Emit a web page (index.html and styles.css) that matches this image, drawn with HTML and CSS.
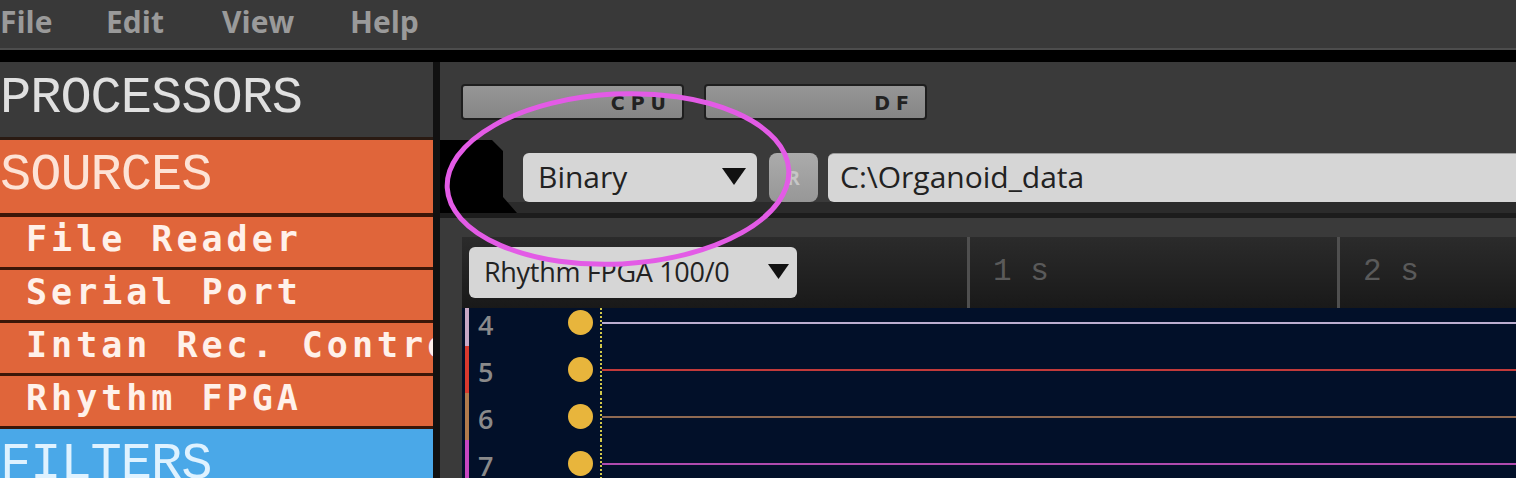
FILE: index.html
```html
<!DOCTYPE html>
<html lang="en">
<head>
<meta charset="utf-8">
<title>Open Ephys GUI</title>
<link rel="stylesheet" href="styles.css">
</head>
<body>
<div class="app">
  <nav class="menubar">
    <span class="menu-item">File</span>
    <span class="menu-item">Edit</span>
    <span class="menu-item">View</span>
    <span class="menu-item">Help</span>
  </nav>
  <div class="main">
    <aside class="sidebar">
      <div class="proc-header">PROCESSORS</div>
      <div class="cat cat-sources">SOURCES</div>
      <div class="item">File Reader</div>
      <div class="item">Serial Port</div>
      <div class="item">Intan Rec. Controller</div>
      <div class="item">Rhythm FPGA</div>
      <div class="cat cat-filters">FILTERS</div>
    </aside>
    <section class="content">
      <div class="control-bar">
        <div class="meter"><span class="meter-label">CPU</span></div>
        <div class="meter"><span class="meter-label">DF</span></div>
      </div>
      <div class="record-row">
        <div class="rec-tab"></div>
        <div class="dropdown engine">
          <span class="dd-text">Binary</span>
          <svg class="dd-arrow" width="24" height="17" viewBox="0 0 24 17"><polygon points="0,0 24,0 12,17" fill="#111"/></svg>
        </div>
        <div class="r-btn">R</div>
        <div class="path-field">C:\Organoid_data</div>
      </div>
      <div class="viewer-wrap">
        <div class="viewer">
          <div class="timescale">
            <div class="ts-left">
              <div class="dropdown stream">
                <span class="dd-text">Rhythm FPGA 100/0</span>
                <svg class="dd-arrow" width="21" height="15" viewBox="0 0 21 15"><polygon points="0,0 21,0 10.5,15" fill="#111"/></svg>
              </div>
            </div>
            <div class="tick"><span>1 s</span></div>
            <div class="tick"><span>2 s</span></div>
          </div>
          <div class="plot">
            <div class="chan c4">
              <div class="cbar"></div>
              <div class="num">4</div>
              <div class="dot"></div>
              <div class="trace"><div class="line"></div></div>
            </div>
            <div class="chan c5">
              <div class="cbar"></div>
              <div class="num">5</div>
              <div class="dot"></div>
              <div class="trace"><div class="line"></div></div>
            </div>
            <div class="chan c6">
              <div class="cbar"></div>
              <div class="num">6</div>
              <div class="dot"></div>
              <div class="trace"><div class="line"></div></div>
            </div>
            <div class="chan c7">
              <div class="cbar"></div>
              <div class="num">7</div>
              <div class="dot"></div>
              <div class="trace"><div class="line"></div></div>
            </div>
          </div>
        </div>
      </div>
    </section>
  </div>
  <svg class="annotation" width="1516" height="478" viewBox="0 0 1516 478">
    <ellipse cx="618" cy="179" rx="171" ry="85" transform="rotate(-3 618 179)" fill="none" stroke="#e35be6" stroke-width="5"/>
  </svg>
</div>
</body>
</html>
```

FILE: styles.css
```css
* { box-sizing: border-box; }

html, body {
  margin: 0;
  padding: 0;
  background: #000;
}

body {
  width: 1516px;
  height: 478px;
  overflow: hidden;
  font-family: "Open Sans", "Noto Sans", sans-serif;
}

.app {
  position: relative;
  width: 1516px;
  height: 478px;
  overflow: hidden;
  background: #000;
}

/* ---------- menu bar ---------- */
.menubar {
  height: 50px;
  display: grid;
  grid-template-columns: 106px 116px 128px auto;
  background: #393939;
  border-bottom: 2px solid #4d4d4d;
  line-height: 43px;
}

.menu-item {
  font-size: 30px;
  font-weight: 700;
  color: #9a9a9a;
}

.main {
  display: flex;
  height: 416px;
  margin-top: 12px;
}

/* ---------- sidebar ---------- */
.sidebar {
  width: 440px;
  flex: none;
  background: #3a3a3a;
  border-right: 7px solid #111;
  overflow: hidden;
  font-family: "Liberation Mono", "DejaVu Sans Mono", monospace;
}

.proc-header {
  height: 78px;
  display: flex;
  align-items: center;
  font-size: 52px;
  color: #e0e0e0;
  border-bottom: 3px solid #2a1a12;
  letter-spacing: -1px;
  padding-bottom: 2px;
}

.cat {
  height: 77px;
  display: flex;
  align-items: center;
  font-size: 52px;
  letter-spacing: -1px;
  padding-bottom: 2px;
}

.cat-sources {
  background: #e0653a;
  color: #fde3d6;
  border-bottom: 4px solid #3b1608;
}

.cat-filters {
  background: #4aa8e8;
  color: #dff2ff;
  border-bottom: 4px solid #1f4a66;
}

.item {
  height: 53px;
  display: flex;
  align-items: center;
  background: #e0653a;
  color: #fff1ea;
  font-family: "DejaVu Sans Mono", "Liberation Mono", monospace;
  font-size: 35px;
  font-weight: 700;
  letter-spacing: 4px;
  padding-left: 26px;
  padding-bottom: 7px;
  white-space: nowrap;
  overflow: hidden;
  border-bottom: 3px solid #3b1608;
}

/* ---------- content ---------- */
.content {
  flex: 1;
  display: flex;
  flex-direction: column;
  background: #3a3a3a;
  overflow: hidden;
  min-width: 0;
}

.control-bar {
  height: 78px;
  flex: none;
  display: flex;
  gap: 20px;
  padding: 22px 0 0 21px;
}

.meter {
  width: 223px;
  height: 36px;
  border: 2px solid #1e1e1e;
  border-radius: 4px;
  background: linear-gradient(#969696, #868686);
  display: flex;
  align-items: center;
  justify-content: flex-end;
  padding-right: 10px;
}

.meter-label {
  font-family: "DejaVu Sans", sans-serif;
  font-weight: 700;
  font-size: 19px;
  letter-spacing: 6px;
  color: #222;
  padding-top: 2px;
}

.record-row {
  flex: none;
  height: 78px;
  display: flex;
  align-items: flex-start;
  background: linear-gradient(#3a3a3a 0 62px, #2b2b2b 62px 73px);
  border-bottom: 5px solid #1c1c1c;
}

.rec-tab {
  width: 77px;
  height: 73px;
  flex: none;
  background: #000;
  clip-path: polygon(0 0, 52px 0, 63px 11px, 63px 57px, 77px 73px, 0 73px);
}

.dropdown {
  display: flex;
  align-items: center;
  justify-content: space-between;
  background: #d6d6d6;
  border-radius: 6px;
  color: #222;
  flex: none;
}

.engine {
  width: 234px;
  height: 49px;
  margin: 13px 0 0 6px;
  padding: 0 11px 2px 15px;
  font-size: 30px;
}

.r-btn {
  width: 49px;
  height: 49px;
  margin: 13px 0 0 12px;
  flex: none;
  border-radius: 8px;
  background: linear-gradient(#ababab, #979797);
  color: #c6c6c6;
  font-size: 19px;
  font-weight: 700;
  display: flex;
  align-items: center;
  justify-content: center;
}

.path-field {
  flex: 1;
  height: 49px;
  margin: 13px -12px 0 10px;
  border-radius: 6px;
  background: #d6d6d6;
  border-top: 1px solid #9c9c9c;
  color: #222;
  font-size: 30px;
  padding: 0 12px 3px;
  display: flex;
  align-items: center;
  white-space: nowrap;
}

.viewer-wrap {
  flex: 1;
  padding: 19px 0 0 22px;
  background: #3a3a3a;
  display: flex;
  min-height: 0;
}

.viewer {
  flex: 1;
  display: flex;
  flex-direction: column;
  background: #021029;
  min-width: 0;
}

.timescale {
  height: 71px;
  flex: none;
  display: grid;
  grid-template-columns: 505px 370px 1fr;
  background: linear-gradient(#2b2b2b, #191919);
}

.ts-left {
  padding: 10px 0 0 7px;
}

.stream {
  width: 328px;
  height: 51px;
  padding: 0 8px 3px 15px;
  font-size: 27px;
  letter-spacing: -0.3px;
}

.tick {
  border-left: 3px solid #4f4f4f;
  padding: 19px 0 0 23px;
  font-family: "Liberation Mono", "DejaVu Sans Mono", monospace;
  font-size: 31px;
  color: #5a5a5a;
  line-height: 1;
}

/* ---------- plot ---------- */
.plot {
  flex: 1;
  overflow: hidden;
  background: #021029;
}

.chan {
  height: 47px;
  display: flex;
  align-items: center;
}

.chan:first-child {
  height: 38px;
  padding-bottom: 9px;
}

.cbar {
  width: 4px;
  align-self: stretch;
  margin-left: 3px;
  flex: none;
}

.chan:first-child .cbar {
  margin-bottom: -9px;
}

.num {
  width: 99px;
  height: 29px;
  flex: none;
  padding-left: 9px;
  font-size: 27px;
  font-weight: 600;
  line-height: 24px;
  color: #8a8a8a;
  padding-top: 5px;
}

.dot {
  width: 25px;
  height: 25px;
  flex: none;
  border-radius: 50%;
  background: #e8b53c;
}

.trace {
  flex: 1;
  align-self: stretch;
  margin-left: 7px;
  border-left: 2px dotted #cfc64a;
  display: flex;
  align-items: center;
}

.chan:first-child .trace {
  margin-bottom: -9px;
  padding-bottom: 9px;
}

.line {
  width: 100%;
  height: 2px;
}

.c4 .cbar { background: #c8a9c6; }
.c4 .line { background: #bcaed0; }
.c5 .cbar { background: #d9392e; }
.c5 .line { background: #c23a3a; }
.c6 .cbar { background: #b07a4c; }
.c6 .line { background: #8f6a52; }
.c7 .cbar { background: #c846c0; }
.c7 .line { background: #b04aae; }

/* ---------- annotation overlay ---------- */
.annotation {
  position: absolute;
  left: 0;
  top: 0;
  pointer-events: none;
}
```
